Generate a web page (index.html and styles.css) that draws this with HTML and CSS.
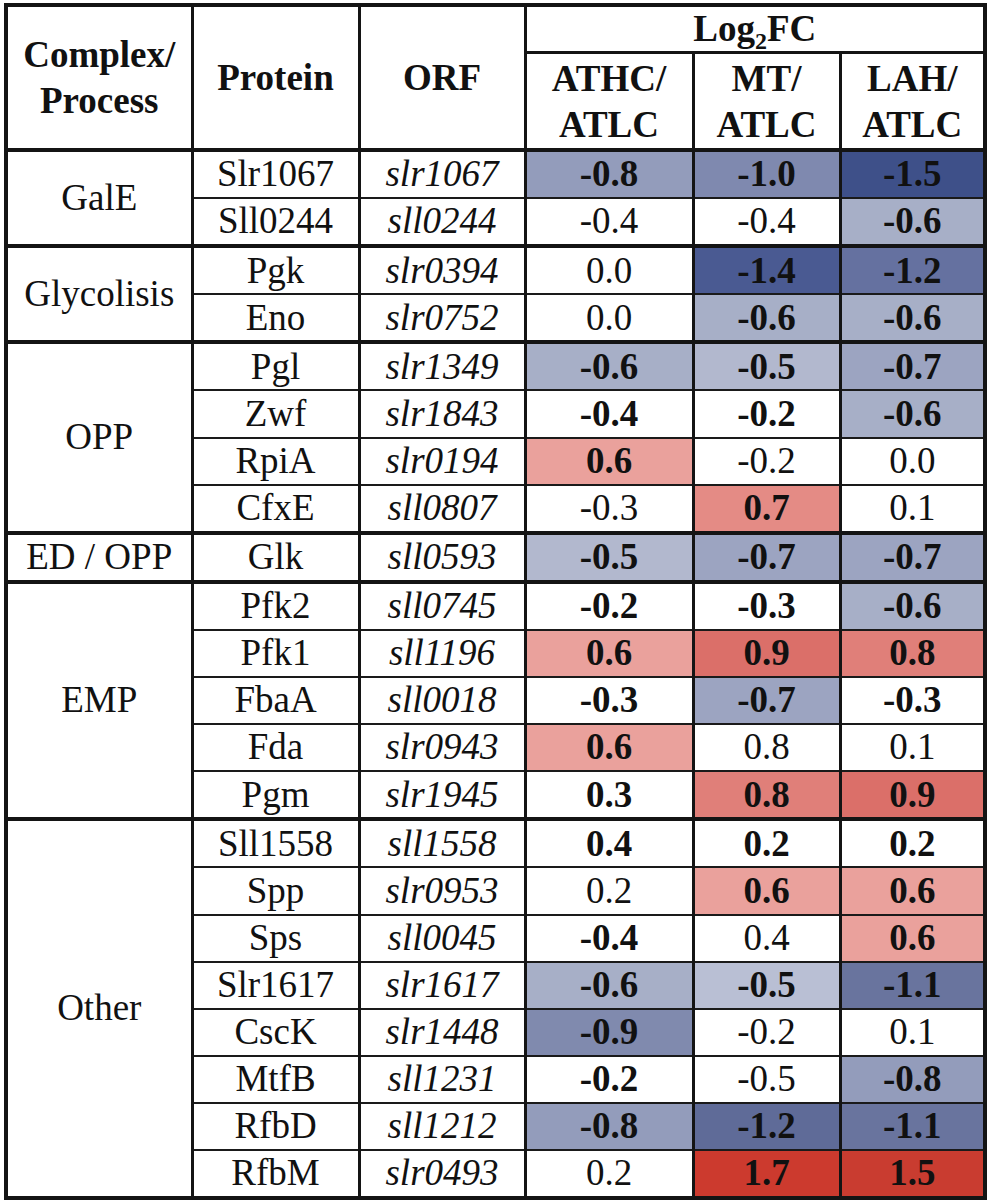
FILE: index.html
```html
<!DOCTYPE html>
<html lang="en">
<head>
<meta charset="utf-8">
<title>Log2FC table</title>
<link rel="stylesheet" href="styles.css">
</head>
<body>
<table class="fc">
  <colgroup>
    <col class="c-cp"><col class="c-pr"><col class="c-orf"><col class="c-v1"><col class="c-v2"><col class="c-v3">
  </colgroup>
  <thead>
    <tr class="h1">
      <th rowspan="2" class="hcp">Complex/<br>Process</th>
      <th rowspan="2">Protein</th>
      <th rowspan="2">ORF</th>
      <th colspan="3" class="hlog">Log<sub>2</sub>FC</th>
    </tr>
    <tr class="h2">
      <th>ATHC/<br>ATLC</th>
      <th>MT/<br>ATLC</th>
      <th>LAH/<br>ATLC</th>
    </tr>
  </thead>
  <tbody>
    <tr class="g">
      <td rowspan="2" class="cp">GalE</td><td>Slr1067</td><td class="orf">slr1067</td>
      <td class="b n8">-0.8</td><td class="b n10">-1.0</td><td class="b n15">-1.5</td>
    </tr>
    <tr>
      <td>Sll0244</td><td class="orf">sll0244</td>
      <td>-0.4</td><td>-0.4</td><td class="b n6">-0.6</td>
    </tr>
    <tr class="g">
      <td rowspan="2" class="cp">Glycolisis</td><td>Pgk</td><td class="orf">slr0394</td>
      <td>0.0</td><td class="b n14">-1.4</td><td class="b n12b">-1.2</td>
    </tr>
    <tr>
      <td>Eno</td><td class="orf">slr0752</td>
      <td>0.0</td><td class="b n6">-0.6</td><td class="b n6">-0.6</td>
    </tr>
    <tr class="g">
      <td rowspan="4" class="cp">OPP</td><td>Pgl</td><td class="orf">slr1349</td>
      <td class="b n6">-0.6</td><td class="b n5">-0.5</td><td class="b n7">-0.7</td>
    </tr>
    <tr>
      <td>Zwf</td><td class="orf">slr1843</td>
      <td class="b">-0.4</td><td class="b">-0.2</td><td class="b n6">-0.6</td>
    </tr>
    <tr>
      <td>RpiA</td><td class="orf">slr0194</td>
      <td class="b p6">0.6</td><td>-0.2</td><td>0.0</td>
    </tr>
    <tr>
      <td>CfxE</td><td class="orf">sll0807</td>
      <td>-0.3</td><td class="b p7">0.7</td><td>0.1</td>
    </tr>
    <tr class="g">
      <td class="cp">ED / OPP</td><td>Glk</td><td class="orf">sll0593</td>
      <td class="b n5">-0.5</td><td class="b n7">-0.7</td><td class="b n7">-0.7</td>
    </tr>
    <tr class="g">
      <td rowspan="5" class="cp">EMP</td><td>Pfk2</td><td class="orf">sll0745</td>
      <td class="b">-0.2</td><td class="b">-0.3</td><td class="b n6">-0.6</td>
    </tr>
    <tr>
      <td>Pfk1</td><td class="orf">sll1196</td>
      <td class="b p6">0.6</td><td class="b p9">0.9</td><td class="b p8">0.8</td>
    </tr>
    <tr>
      <td>FbaA</td><td class="orf">sll0018</td>
      <td class="b">-0.3</td><td class="b n7">-0.7</td><td class="b">-0.3</td>
    </tr>
    <tr>
      <td>Fda</td><td class="orf">slr0943</td>
      <td class="b p6">0.6</td><td>0.8</td><td>0.1</td>
    </tr>
    <tr>
      <td>Pgm</td><td class="orf">slr1945</td>
      <td class="b">0.3</td><td class="b p8">0.8</td><td class="b p9">0.9</td>
    </tr>
    <tr class="g">
      <td rowspan="8" class="cp">Other</td><td>Sll1558</td><td class="orf">sll1558</td>
      <td class="b">0.4</td><td class="b">0.2</td><td class="b">0.2</td>
    </tr>
    <tr>
      <td>Spp</td><td class="orf">slr0953</td>
      <td>0.2</td><td class="b p6">0.6</td><td class="b p6">0.6</td>
    </tr>
    <tr>
      <td>Sps</td><td class="orf">sll0045</td>
      <td class="b">-0.4</td><td>0.4</td><td class="b p6">0.6</td>
    </tr>
    <tr>
      <td>Slr1617</td><td class="orf">slr1617</td>
      <td class="b n6">-0.6</td><td class="b n5l">-0.5</td><td class="b n11">-1.1</td>
    </tr>
    <tr>
      <td>CscK</td><td class="orf">slr1448</td>
      <td class="b n9">-0.9</td><td>-0.2</td><td>0.1</td>
    </tr>
    <tr>
      <td>MtfB</td><td class="orf">sll1231</td>
      <td class="b">-0.2</td><td>-0.5</td><td class="b n8">-0.8</td>
    </tr>
    <tr>
      <td>RfbD</td><td class="orf">sll1212</td>
      <td class="b n8">-0.8</td><td class="b n12">-1.2</td><td class="b n11">-1.1</td>
    </tr>
    <tr>
      <td>RfbM</td><td class="orf">slr0493</td>
      <td>0.2</td><td class="b p17">1.7</td><td class="b p15">1.5</td>
    </tr>
  </tbody>
</table>
</body>
</html>
```

FILE: styles.css
```css
html, body {
  margin: 0;
  padding: 0;
  background: #ffffff;
}

body {
  padding: 3px 0 0 4px;
}

.fc {
  border-collapse: collapse;
  table-layout: fixed;
  width: 983px;
  border: 4px solid #141414;
  font-family: "Liberation Serif", "Times New Roman", serif;
  font-size: 37px;
  color: #111111;
}

.c-cp { width: 186px; }
.c-pr { width: 167px; }
.c-orf { width: 166px; }
.c-v1 { width: 168px; }
.c-v2 { width: 147px; }
.c-v3 { width: 145px; }

.fc th,
.fc td {
  padding: 0;
  text-align: center;
  vertical-align: middle;
  border-top: 2px solid #1a1a1a;
  border-bottom: 2px solid #1a1a1a;
  border-left: 3px solid #141414;
  border-right: 3px solid #141414;
  line-height: 1.2;
  white-space: nowrap;
}

.fc th {
  font-weight: bold;
  line-height: 46px;
  border-top: 3px solid #141414;
  border-bottom: 4px solid #141414;
}

.h1 th { height: 44px; }
.h1 th.hlog {
  border-bottom: 3px solid #141414;
  line-height: 40px;
}
.h2 th { height: 91px; padding-top: 2px; }

.hcp { padding-top: 4px; }

.fc sub {
  font-size: 24px;
  line-height: 0;
  vertical-align: -8px;
}

.fc tbody td {
  height: 45.1px;
}

.fc tr.g td {
  border-top: 4px solid #141414;
}

.fc td.cp {
  border-top: 4px solid #141414;
  border-bottom: 4px solid #141414;
}

.orf { font-style: italic; }
.b { font-weight: bold; }

/* blue scale (negative) */
.n5  { background: #b2b8ce; }
.n5l { background: #b9bfd4; }
.n6  { background: #a7afc7; }
.n7  { background: #9ca4c1; }
.n8  { background: #939cbb; }
.n9  { background: #808aae; }
.n10 { background: #7f89af; }
.n11 { background: #69749e; }
.n12 { background: #5f6b98; }
.n12b { background: #6571a0; }
.n14 { background: #4a5a92; }
.n15 { background: #3e5089; }

/* red scale (positive) */
.p6  { background: #eaa19c; }
.p7  { background: #e48b85; }
.p8  { background: #e07f79; }
.p9  { background: #db6f69; }
.p15 { background: #c93c30; }
.p17 { background: #cc3a2e; }
```
